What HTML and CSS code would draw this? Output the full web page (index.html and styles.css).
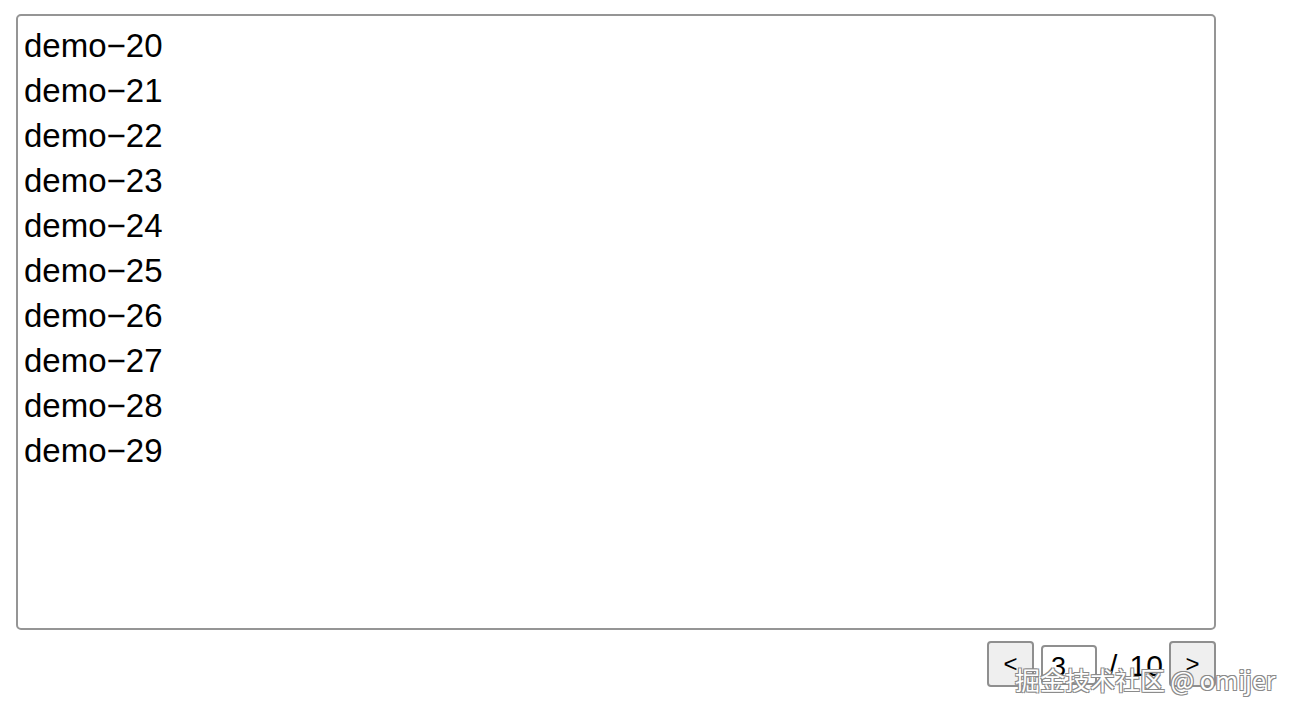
FILE: index.html
```html
<!DOCTYPE html>
<html lang="zh">
<head>
<meta charset="utf-8">
<title>Pagination demo</title>
<link rel="stylesheet" href="styles.css">
</head>
<body>
<div class="page">
  <div class="list">
    <div class="item">demo−20</div>
    <div class="item">demo−21</div>
    <div class="item">demo−22</div>
    <div class="item">demo−23</div>
    <div class="item">demo−24</div>
    <div class="item">demo−25</div>
    <div class="item">demo−26</div>
    <div class="item">demo−27</div>
    <div class="item">demo−28</div>
    <div class="item">demo−29</div>
  </div>
  <div class="pager">
    <button class="btn">&lt;</button>
    <input class="num" type="text" value="3">
    <span class="total">/ 10</span>
    <button class="btn">&gt;</button>
  </div>
</div>
<div class="watermark">掘金技术社区 @ omijer</div>
</body>
</html>
```
FILE: styles.css
```css
html, body {
  margin: 0;
  padding: 0;
  background: #fff;
}
body {
  font-family: "Liberation Sans", Arial, "Noto Sans CJK SC", sans-serif;
  color: #000;
}
.page {
  padding: 14px 16px;
  width: 1200px;
}
.list {
  box-sizing: border-box;
  width: 1200px;
  height: 616px;
  border: 2px solid #959595;
  border-radius: 5px;
  padding: 7px 6px;
  font-size: 33px;
  line-height: 45px;
}
.item {
  white-space: nowrap;
}
.pager {
  display: flex;
  justify-content: flex-end;
  align-items: center;
  margin-top: 11px;
}
.btn {
  box-sizing: border-box;
  width: 47px;
  height: 46px;
  background: #efefef;
  border: 2px solid #8f8f8f;
  border-radius: 4px;
  font-family: "Liberation Sans", Arial, sans-serif;
  font-size: 24px;
  color: #000;
  padding: 0;
  line-height: 1;
}
.num {
  box-sizing: border-box;
  width: 56px;
  height: 40px;
  margin: 2px 0 0 7px;
  border: 2px solid #8f8f8f;
  border-radius: 4px;
  font-family: "Liberation Sans", Arial, sans-serif;
  font-size: 27px;
  padding: 4px 8px 0;
  color: #000;
}
.total {
  font-size: 30px;
  margin: 4px 6px 0 12px;
  word-spacing: 4px;
}
.watermark {
  position: absolute;
  left: 1015px;
  top: 661px;
  font-family: "Noto Sans CJK SC", "Liberation Sans", sans-serif;
  font-size: 25px;
  line-height: 36px;
  color: #fff;
  white-space: nowrap;
  text-shadow: -1px -1px 0 #8a8a8a, 1px -1px 0 #8a8a8a, -1px 1px 0 #8a8a8a, 1px 1px 0 #8a8a8a;
}
```
